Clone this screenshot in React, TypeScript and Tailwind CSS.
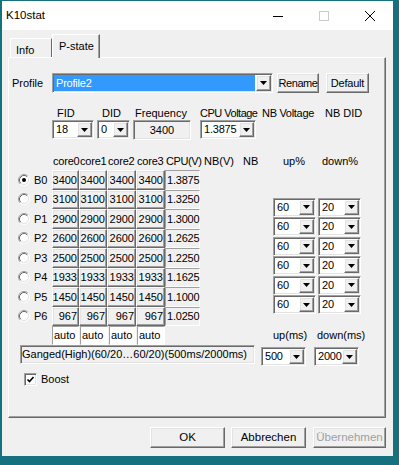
import React from "react";

const raised =
  "border border-t-white border-l-white border-r-[#696969] border-b-[#696969] shadow-[inset_-1px_-1px_0_#a0a0a0,inset_1px_1px_0_#e3e3e3]";
const sunken =
  "border border-t-[#a0a0a0] border-l-[#a0a0a0] border-r-white border-b-white shadow-[inset_1px_1px_0_#696969,inset_-1px_-1px_0_#e3e3e3]";
const edge = "border border-t-[#a0a0a0] border-l-[#a0a0a0] border-r-white border-b-white";

function Arrow() {
  return (
    <svg width="7" height="4" viewBox="0 0 7 4">
      <path d="M0 0h7L3.5 4z" fill="#000" />
    </svg>
  );
}

function Combo({ value, className = "", selected = false }: { value: string; className?: string; selected?: boolean }) {
  return (
    <div className={`flex p-[1px] bg-white ${sunken} ${className}`}>
      <span
        className={`flex-1 flex items-center whitespace-nowrap overflow-hidden pl-[2px] tracking-[-0.2px] ${
          selected ? "bg-[#3399ff] text-white mr-[1px]" : ""
        }`}
      >
        {value}
      </span>
      <span className={`w-[15px] shrink-0 flex items-center justify-center bg-[#f0f0f0] ${raised}`}>
        <Arrow />
      </span>
    </div>
  );
}

function Radio({ on = false }: { on?: boolean }) {
  return (
    <svg width="12" height="12" viewBox="0 0 12 12" className="shrink-0">
      <circle cx="6" cy="6" r="4.5" fill="#fff" />
      <path d="M2.11 9.89A5.5 5.5 0 0 1 9.89 2.11" stroke="#a0a0a0" fill="none" />
      <path d="M9.89 2.11A5.5 5.5 0 0 1 2.11 9.89" stroke="#fff" fill="none" />
      <path d="M2.82 9.18A4.5 4.5 0 0 1 9.18 2.82" stroke="#696969" fill="none" />
      <path d="M9.18 2.82A4.5 4.5 0 0 1 2.82 9.18" stroke="#e3e3e3" fill="none" />
      {on && <circle cx="6" cy="6" r="2" fill="#000" />}
    </svg>
  );
}

const rows = [
  ["B0", "3400", "1.3875"],
  ["P0", "3100", "1.3250"],
  ["P1", "2900", "1.3000"],
  ["P2", "2600", "1.2625"],
  ["P3", "2500", "1.2250"],
  ["P4", "1933", "1.1625"],
  ["P5", "1450", "1.1000"],
  ["P6", "967", "1.0250"],
];

const cellW = ["w-[27px]", "w-[28px]", "w-[29px]", "w-[29px]"];

export default function App() {
  return (
    <div className="w-[399px] h-[465px] bg-[#16717f] pt-[1px] pl-[2px] font-['Liberation_Sans',Arial,sans-serif] text-[11px] text-black">
      <div className="w-[391px] h-[455px] bg-[#f0f0f0] flex flex-col">
        {/* title bar */}
        <div className="h-[29px] bg-white flex items-center">
          <span className="pl-[4px] flex-1 text-[11.5px]">K10stat</span>
          <span className="w-[46px] flex justify-center">
            <svg width="10" height="10" viewBox="0 0 10 10">
              <path d="M0 5.5h10" stroke="#000" />
            </svg>
          </span>
          <span className="w-[46px] flex justify-center">
            <svg width="10" height="10" viewBox="0 0 10 10">
              <rect x="0.5" y="0.5" width="9" height="9" stroke="#cccccc" fill="none" />
            </svg>
          </span>
          <span className="w-[46px] flex justify-center">
            <svg width="10" height="10" viewBox="0 0 10 10">
              <path d="M0 0l10 10M10 0L0 10" stroke="#000" />
            </svg>
          </span>
        </div>

        {/* tabs */}
        <div className="h-[28px] flex items-end pl-[8px] -mb-[1px]">
          <div className="h-[20px] w-[42px] border-t border-l border-r border-t-white border-l-white border-r-[#696969] pl-[5px] pt-[3px]">
            Info
          </div>
          <div className="relative z-10 h-[24px] w-[48px] bg-[#f0f0f0] border-t border-l border-r border-t-white border-l-white border-r-[#696969] shadow-[inset_-1px_0_0_#a0a0a0] pl-[6px] pt-[3px]">
            P-state
          </div>
        </div>

        {/* panel */}
        <div className="ml-[6px] w-[378px] h-[361px] border border-t-white border-l-white border-r-[#696969] border-b-[#696969] shadow-[inset_-1px_-1px_0_#a0a0a0] flex flex-col">
          {/* profile row */}
          <div className="mt-[15px] flex items-start">
            <span className="w-[43px] pl-[3px] h-[20px] flex items-center">Profile</span>
            <Combo value="Profile2" selected className="w-[221px] h-[20px]" />
            <div className={`ml-[4px] w-[42px] h-[20px] bg-[#f0f0f0] ${raised} flex items-center justify-center tracking-[-0.4px]`}>
              Rename
            </div>
            <div className={`ml-[7px] w-[43px] h-[20px] bg-[#f0f0f0] ${raised} flex items-center justify-center tracking-[-0.2px]`}>
              Default
            </div>
          </div>

          {/* FID / DID row */}
          <div className="mt-[12px] flex items-start h-[34px]">
            <span className="w-[43px]" />
            <div className="w-[45px] flex flex-col">
              <span className="h-[15px] pl-[5px]">FID</span>
              <Combo value="18" className="w-[42px] h-[19px]" />
            </div>
            <div className="w-[36px] flex flex-col">
              <span className="h-[15px] pl-[5px]">DID</span>
              <Combo value="0" className="w-[33px] h-[19px]" />
            </div>
            <div className="w-[67px] flex flex-col">
              <span className="h-[15px] pl-[2px]">Frequency</span>
              <div className={`w-[58px] h-[20px] ${sunken} flex items-center justify-center`}>3400</div>
            </div>
            <div className="w-[62px] flex flex-col">
              <span className="h-[15px] whitespace-nowrap tracking-[-0.5px]">CPU Voltage</span>
              <Combo value="1.3875" className="w-[56px] h-[19px]" />
            </div>
            <div className="w-[63px]">
              <span className="whitespace-nowrap tracking-[-0.3px]">NB Voltage</span>
            </div>
            <div>
              <span className="whitespace-nowrap">NB DID</span>
            </div>
          </div>

          {/* table */}
          <div className="mt-[13px] flex">
            <div className="w-[191px] flex flex-col">
              <div className="h-[18px] flex items-center whitespace-nowrap tracking-[-0.2px]">
                <span className="w-[43px] shrink-0" />
                <span className="w-[27px] shrink-0 pl-[1px]">core0</span>
                <span className="w-[28px] shrink-0 pl-[1px]">core1</span>
                <span className="w-[29px] shrink-0 pl-[1px]">core2</span>
                <span className="w-[29px] shrink-0 pl-[1px]">core3</span>
                <span className="w-[35px] shrink-0 pl-[1px] tracking-[-0.4px]">CPU(V)</span>
              </div>
              {rows.map((r, i) => (
                <div key={r[0]} className="h-[19.5px] flex">
                  <div className="w-[43px] shrink-0 flex items-center pl-[9px] gap-[4px]">
                    <Radio on={i === 0} />
                    <span>{r[0]}</span>
                  </div>
                  {cellW.map((w, j) => (
                    <div
                      key={j}
                      className={`${w} shrink-0 ${raised} bg-[#f0f0f0] flex items-center justify-end pr-[1px]`}
                    >
                      {r[1]}
                    </div>
                  ))}
                  <div className={`w-[35px] shrink-0 ${edge} flex items-center pl-[1px] whitespace-nowrap tracking-[-0.2px]`}>
                    {r[2]}
                  </div>
                </div>
              ))}
            </div>
            <div className="flex flex-col">
              <div className="h-[18px] flex items-center whitespace-nowrap">
                <span className="w-[43px] pl-[4px]">NB(V)</span>
                <span className="w-[30px]">NB</span>
                <span className="w-[45px] pl-[10px]">up%</span>
                <span className="pl-[4px]">down%</span>
              </div>
              <div className="mt-[27.5px] ml-[73px] flex flex-col">
                {[0, 1, 2, 3, 4, 5].map((k) => (
                  <div key={k} className="h-[19.5px] flex gap-[2px]">
                    <Combo value="60" className="w-[43px] h-[19px]" />
                    <Combo value="20" className="w-[43px] h-[19px]" />
                  </div>
                ))}
              </div>
            </div>
          </div>

          {/* auto row */}
          <div className="h-[19px] flex items-stretch whitespace-nowrap">
            <span className="w-[43px] shrink-0" />
            <div className={`w-[27px] ${edge} bg-white pl-[1px] flex items-center`}>auto</div>
            <div className={`ml-[1px] w-[28px] ${edge} bg-white pl-[1px] flex items-center`}>auto</div>
            <div className={`ml-[1px] w-[27px] ${edge} bg-white pl-[1px] flex items-center`}>auto</div>
            <div className={`ml-[1px] w-[28px] ${edge} bg-white pl-[1px] flex items-center`}>auto</div>
            <span className="ml-[108px] w-[44px] flex items-center">up(ms)</span>
            <span className="flex items-center">down(ms)</span>
          </div>

          {/* ganged row */}
          <div className="h-[21px] flex items-start">
            <div className={`ml-[11px] w-[235px] h-[19px] ${sunken} flex items-center pl-[1px] whitespace-nowrap overflow-hidden`}>
              Ganged(High)(60/20…60/20)(500ms/2000ms)
            </div>
            <Combo value="500" className="ml-[6px] mt-[2px] w-[45px] h-[19px]" />
            <Combo value="2000" className="ml-[8px] mt-[2px] w-[45px] h-[19px]" />
          </div>

          {/* boost */}
          <div className="mt-[5px] flex items-center">
            <div className={`ml-[15px] w-[13px] h-[13px] bg-white ${sunken} flex items-center justify-center`}>
              <svg width="9" height="9" viewBox="0 0 9 9">
                <path d="M1.5 4.5l2 2 4-4.5" stroke="#000" strokeWidth="1.6" fill="none" />
              </svg>
            </div>
            <span className="ml-[4px]">Boost</span>
          </div>
        </div>

        {/* dialog buttons */}
        <div className="mt-[9px] flex pl-[148px] text-[11.5px]">
          <div className={`w-[75px] h-[21px] bg-[#f0f0f0] ${raised} border-r-[#202020] border-b-[#202020] flex items-center justify-center`}>
            OK
          </div>
          <div className={`ml-[6px] w-[75px] h-[21px] bg-[#f0f0f0] ${raised} flex items-center justify-center`}>
            Abbrechen
          </div>
          <div className={`ml-[7px] w-[73px] h-[21px] bg-[#f0f0f0] ${raised} flex items-center justify-center text-[#a0a0a0]`}>
            Übernehmen
          </div>
        </div>
      </div>
    </div>
  );
}
